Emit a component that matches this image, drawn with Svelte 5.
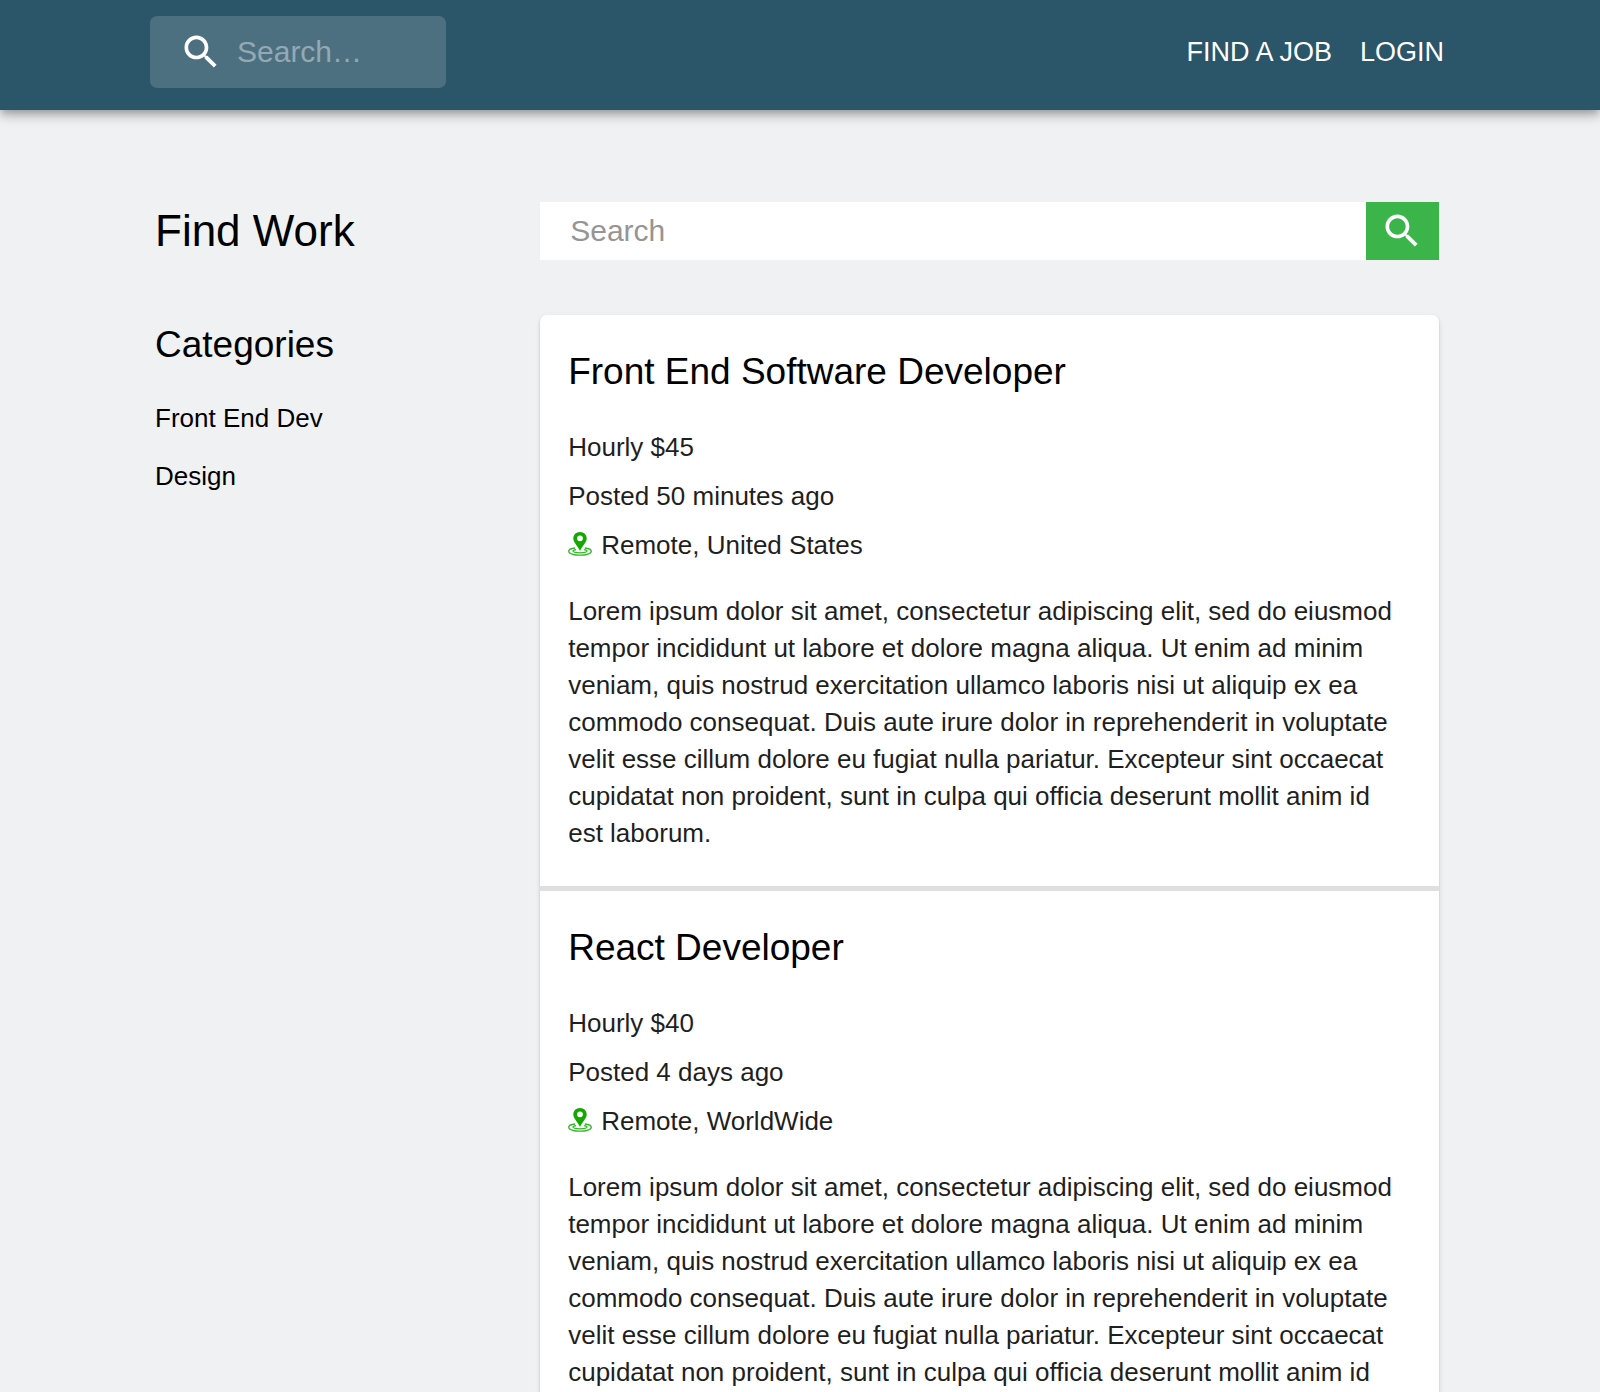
<script>
  let query = "";
  let navQuery = "";
  const categories = ["Front End Dev", "Design"];
  const description =
    "Lorem ipsum dolor sit amet, consectetur adipiscing elit, sed do eiusmod tempor incididunt ut labore et dolore magna aliqua. Ut enim ad minim veniam, quis nostrud exercitation ullamco laboris nisi ut aliquip ex ea commodo consequat. Duis aute irure dolor in reprehenderit in voluptate velit esse cillum dolore eu fugiat nulla pariatur. Excepteur sint occaecat cupidatat non proident, sunt in culpa qui officia deserunt mollit anim id est laborum.";
  const jobs = [
    {
      title: "Front End Software Developer",
      rate: 45,
      posted: "50 minutes ago",
      location: "Remote, United States",
      description
    },
    {
      title: "React Developer",
      rate: 40,
      posted: "4 days ago",
      location: "Remote, WorldWide",
      description
    }
  ];
</script>

<style>
  :global(body) {
    margin: 0;
    background: #f0f1f3;
    color: #000;
    font-family: Helvetica, "Liberation Sans", Arial, sans-serif;
    font-size: 26px;
    line-height: 37px;
  }
  h1,
  h2,
  p,
  ul {
    margin: 0;
    padding: 0;
    font-weight: 400;
  }
  a {
    color: inherit;
    text-decoration: none;
  }
  input {
    flex: 1;
    min-width: 0;
    padding: 0;
    border: 0;
    outline: 0;
    background: none;
    color: inherit;
    font-family: inherit;
    font-size: 30px;
  }
  header {
    display: flex;
    align-items: center;
    justify-content: space-between;
    padding: 16px 156px 22px 150px;
    background: #2b5568;
    color: #fff;
    box-shadow: 0 4px 7px -2px rgba(0, 0, 0, 0.2),
      0 7px 9px 0 rgba(0, 0, 0, 0.14), 0 2px 18px 0 rgba(0, 0, 0, 0.12);
  }
  .nav-search {
    display: flex;
    align-items: center;
    gap: 14px;
    box-sizing: border-box;
    width: 296px;
    height: 72px;
    padding: 0 29px;
    border-radius: 7px;
    background: rgba(255, 255, 255, 0.16);
  }
  .nav-search input::placeholder {
    color: #94a9b3;
    opacity: 1;
  }
  nav {
    display: flex;
    gap: 28px;
    font-size: 27px;
    text-transform: uppercase;
  }
  .search-icon {
    flex: none;
    display: block;
    width: 44px;
    height: 44px;
    fill: #fff;
  }
  .page {
    display: grid;
    grid-template-columns: 3fr 7fr;
    padding: 92px 161px 92px 155px;
  }
  h1 {
    margin-bottom: 63px;
    font-size: 44px;
    line-height: 58px;
  }
  h2 {
    font-size: 37px;
    line-height: 44px;
  }
  .categories {
    display: grid;
    gap: 21px;
    margin-top: 33px;
    list-style-type: none;
  }
  .job-search {
    display: flex;
    height: 58px;
    margin-bottom: 55px;
    background: #fff;
  }
  .job-search input {
    padding-left: 30px;
  }
  .job-search input::placeholder {
    color: #959595;
    opacity: 1;
  }
  .job-search button {
    display: flex;
    align-items: center;
    justify-content: center;
    width: 73px;
    padding: 0;
    border: 0;
    background: #3bb54a;
  }
  .jobs {
    border-radius: 7px;
    background: #fff;
    box-shadow: 0 4px 2px -2px rgba(0, 0, 0, 0.2),
      0 2px 2px 0 rgba(0, 0, 0, 0.14), 0 2px 5px 0 rgba(0, 0, 0, 0.12);
  }
  .job {
    padding: 35px 28px 34px;
    border-bottom: 5px solid #dfdfdf;
  }
  .details {
    display: grid;
    gap: 12px;
    margin: 35px 0 29px;
  }
  .details,
  .description {
    color: #1f1f1f;
  }
  .location {
    display: flex;
    align-items: center;
    gap: 9px;
  }
  .pin {
    width: 24px;
    height: 24px;
    padding-bottom: 4px;
  }
</style>

{#snippet searchIcon()}
  <svg class="search-icon" viewBox="0 0 24 24" aria-hidden="true">
    <path d="M15.5 14h-.79l-.28-.27C15.41 12.59 16 11.11 16 9.5 16 5.91 13.09 3 9.5 3S3 5.91 3 9.5 5.91 16 9.5 16c1.61 0 3.09-.59 4.23-1.57l.27.28v.79l5 4.99L20.49 19l-4.99-5zm-6 0C7.01 14 5 11.99 5 9.5S7.01 5 9.5 5 14 7.01 14 9.5 11.99 14 9.5 14z" />
  </svg>
{/snippet}

<header>
  <div class="nav-search">
    {@render searchIcon()}
    <input bind:value={navQuery} type="text" placeholder="Search…" aria-label="Search" />
  </div>
  <nav>
    <a href="#jobs">Find a job</a>
    <a href="#login">Login</a>
  </nav>
</header>

<div class="page">
  <aside>
    <h1>Find Work</h1>
    <h2>Categories</h2>
    <ul class="categories">
      {#each categories as category}
        <li><a href="#jobs">{category}</a></li>
      {/each}
    </ul>
  </aside>
  <main>
    <form class="job-search" on:submit|preventDefault>
      <input bind:value={query} type="text" placeholder="Search" aria-label="Search jobs" />
      <button type="submit" aria-label="Search">
        {@render searchIcon()}
      </button>
    </form>
    <div class="jobs" id="jobs">
      {#each jobs as job}
        <article class="job">
          <h2>{job.title}</h2>
          <div class="details">
            <p>Hourly ${job.rate}</p>
            <p>Posted {job.posted}</p>
            <p class="location">
              <svg class="pin" viewBox="0 0 24 24" aria-hidden="true">
                <g fill="none" stroke="#35b52a" stroke-width="1.3">
                  <path d="M7.2 16C2.9 16.500.7 17.700.7 19.200c0 2.200 5 4 11.300 4s11.300-1.800 11.300-4c0-1.500-2.200-2.700-6.500-3.200" />
                  <path d="M8.200 17.600c-2.100.3-3.200.8-3.200 1.500 0 1.100 3 1.800 7 1.800s7-.7 7-1.800c0-.7-1.100-1.200-3.200-1.500" />
                </g>
                <path fill="#12a800" fill-rule="evenodd" d="M12 0C8.200 0 5.300 2.800 5.300 6.500c0 3.800 4.200 7 6.700 12.500 2.500-5.500 6.700-8.700 6.700-12.500C18.700 2.800 15.800 0 12 0zm0 3.400a2.900 2.900 0 1 1 0 5.800 2.900 2.900 0 0 1 0-5.800z" />
              </svg>
              {job.location}
            </p>
          </div>
          <p class="description">{job.description}</p>
        </article>
      {/each}
    </div>
  </main>
</div>
